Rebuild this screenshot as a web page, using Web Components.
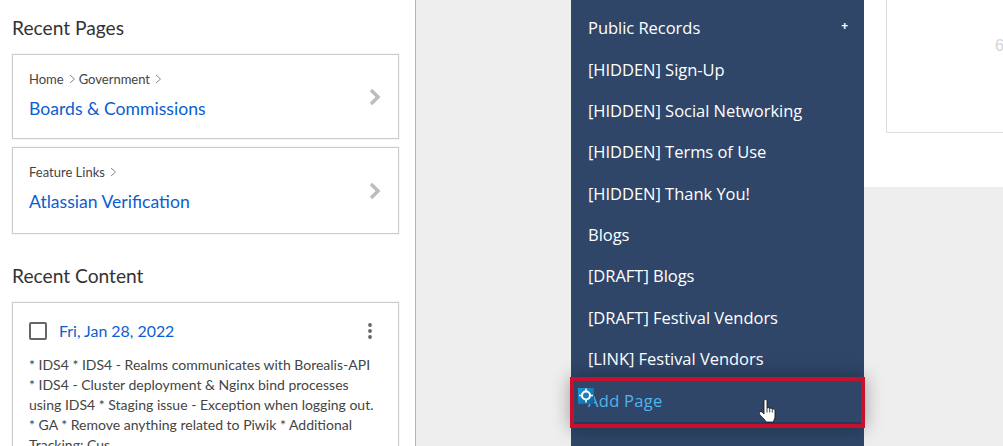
<!DOCTYPE html>
<html>
<head>
<meta charset="utf-8">
<title>Recent Pages</title>
<style>
html, body { margin: 0; height: 446px; overflow: hidden; background: #eee; }
</style>
</head>
<body>
<app-shell>
    <side-panel slot="side">
        <panel-heading>Recent Pages</panel-heading>
        <page-card crumbs="Home,Government" title="Boards &amp; Commissions" style="height:85px"></page-card>
        <page-card crumbs="Feature Links" title="Atlassian Verification" style="height:87px;margin-top:8px"></page-card>
        <panel-heading style="margin-top:30px">Recent Content</panel-heading>
        <content-card date="Fri, Jan 28, 2022">* IDS4 * IDS4 - Realms communicates with Borealis-API * IDS4 - Cluster deployment &amp; Nginx bind processes using IDS4 * Staging issue - Exception when logging out. * GA * Remove anything related to Piwik * Additional Tracking: Cus</content-card>
    </side-panel>
    <nav-menu slot="nav">
        <nav-item expandable>Public Records</nav-item>
        <nav-item>[HIDDEN] Sign-Up</nav-item>
        <nav-item>[HIDDEN] Social Networking</nav-item>
        <nav-item>[HIDDEN] Terms of Use</nav-item>
        <nav-item>[HIDDEN] Thank You!</nav-item>
        <nav-item>Blogs</nav-item>
        <nav-item>[DRAFT] Blogs</nav-item>
        <nav-item>[DRAFT] Festival Vendors</nav-item>
        <nav-item>[LINK] Festival Vendors</nav-item>
        <nav-item highlighted>Add Page</nav-item>
    </nav-menu>
    <preview-panel slot="preview">6</preview-panel>
</app-shell>

<script>
class AppShell extends HTMLElement {
    constructor() {
        super();
        this.attachShadow({mode: 'open'});
        this.shadowRoot.innerHTML = `
<style>
:host { display: flex; height: 446px; overflow: hidden; background: #eee; }
.side { flex: 0 0 416px; }
.middle { flex: 0 0 155px; }
.nav { flex: 0 0 293px; }
.preview { flex: 1; min-width: 0; }
</style>
<div class="side"><slot name="side"></slot></div>
<div class="middle"></div>
<div class="nav"><slot name="nav"></slot></div>
<div class="preview"><slot name="preview"></slot></div>`;
    }
}

class SidePanel extends HTMLElement {
    constructor() {
        super();
        this.attachShadow({mode: 'open'});
        this.shadowRoot.innerHTML = `
<style>
:host {
    display: flex;
    flex-direction: column;
    box-sizing: border-box;
    height: 446px;
    overflow: hidden;
    padding: 16px 16px 0 12px;
    background: #fff;
    border-right: 1px solid #b5b5b5;
    font-family: Lato, sans-serif;
    color: #333;
}
</style>
<slot></slot>`;
    }
}

class PanelHeading extends HTMLElement {
    constructor() {
        super();
        this.attachShadow({mode: 'open'});
        this.shadowRoot.innerHTML = `
<style>
:host { display: block; flex: none; height: 24px; line-height: 23px; margin-bottom: 14px; font-size: 19.200px; color: #333; }
</style>
<slot></slot>`;
    }
}

class PageCard extends HTMLElement {
    constructor() {
        super();
        this.attachShadow({mode: 'open'});
        let crumbs = this.getAttribute("crumbs").split(",").map(c => `<span>${c}</span>
            <svg width="7" height="10" viewBox="0 0 7 10"><path d="M1 1l4.500 4-4.500 4" fill="none" stroke="#888" stroke-width="1"/></svg>`).join("");
        this.shadowRoot.innerHTML = `
<style>
:host {
    display: flex;
    flex: none;
    align-items: center;
    box-sizing: border-box;
    padding: 0 17px 0 16px;
    border: 1px solid #ccc;
    box-shadow: 0 0 1px #ccc;
}
.text { flex: 1; align-self: flex-start; margin-top: 14px; }
.crumbs { display: flex; align-items: center; gap: 5px; font-size: 13px; line-height: 20px; color: #444; margin-bottom: 8px; }
.crumbs svg { margin-right: -2px; }
.title { font-size: 17.600px; line-height: 24px; color: #0b5ed0; }
</style>
<div class="text">
    <div class="crumbs">${crumbs}</div>
    <div class="title">${this.getAttribute("title").replace("&", "&amp;")}</div>
</div>
<svg width="12" height="18" viewBox="0 0 12 18"><path d="M2 2l7 7-7 7" fill="none" stroke="#bdbdbd" stroke-width="3.500"/></svg>`;
    }
}

class ContentCard extends HTMLElement {
    constructor() {
        super();
        this.attachShadow({mode: 'open'});
        this.shadowRoot.innerHTML = `
<style>
:host {
    display: block;
    flex: none;
    box-sizing: border-box;
    height: 200px;
    padding: 18px 17px 0 16px;
    border: 1px solid #ccc;
    box-shadow: 0 0 1px #ccc;
}
.head { display: flex; align-items: center; height: 20px; margin-bottom: 14px; }
.box { flex: none; width: 14px; height: 14px; margin-right: 12px; border: 2px solid #666; border-radius: 2px; }
.date { flex: 1; margin-top: -2px; font-size: 15.900px; color: #0b5ed0; }
.more { margin-right: 9px; }
.body { padding-right: 4px; font-size: 14px; line-height: 20px; color: #444; }
</style>
<div class="head">
    <div class="box"></div>
    <div class="date">${this.getAttribute("date")}</div>
    <svg class="more" width="4" height="16" viewBox="0 0 4 16" fill="#666"><circle cx="2" cy="2" r="1.900"/><circle cx="2" cy="8" r="1.900"/><circle cx="2" cy="14" r="1.900"/></svg>
</div>
<div class="body"><slot></slot></div>`;
    }
}

class NavMenu extends HTMLElement {
    constructor() {
        super();
        this.attachShadow({mode: 'open'});
        this.shadowRoot.innerHTML = `
<style>
:host {
    display: block;
    box-sizing: border-box;
    height: 446px;
    padding-top: 7px;
    background: #2f4669;
    font-family: "Open Sans", sans-serif;
}
</style>
<slot></slot>`;
    }
}

class NavItem extends HTMLElement {
    constructor() {
        super();
        this.attachShadow({mode: 'open'});
        let highlighted = this.hasAttribute("highlighted");
        this.shadowRoot.innerHTML = `
<style>
:host {
    display: flex;
    position: relative;
    align-items: center;
    justify-content: space-between;
    height: 41.35px;
    padding: 0 17px;
    font-size: 16.500px;
    letter-spacing: -0.03px;
    color: #fff;
}
:host([highlighted]) { color: #4db5f0; letter-spacing: 0.3px; }
:host([highlighted]) .label { margin-top: 2px; }
.plus { font-size: 12px; font-weight: 700; margin-top: -4px; margin-right: -1px; color: #fff; }
.frame {
    position: absolute;
    left: -1px;
    right: -1px;
    top: -2px;
    height: 51px;
    box-sizing: border-box;
    border: 4px solid #c8102e;
    box-shadow: 0 0 18px rgba(0,0,0,.35), inset 0 -2px 0 #263a59;
    pointer-events: none;
}
.gear { position: absolute; left: 7px; top: 9px; }
.hand { position: absolute; left: 188px; top: 20px; }
</style>
<span class="label"><slot></slot></span>
${this.hasAttribute("expandable") ? '<span class="plus">+</span>' : ''}
${highlighted ? `<div class="frame"></div>
<svg class="gear" width="16" height="16" viewBox="0 0 16 16">
    <defs><linearGradient id="g" x1="0" y1="0" x2="1" y2="1"><stop offset="0" stop-color="#1f9bd6"/><stop offset="1" stop-color="#0f5f96"/></linearGradient></defs>
    <rect width="16" height="16" fill="url(#g)"/>
    <circle cx="8" cy="7.500" r="4" fill="#1a7fb8" stroke="#fff" stroke-width="2"/>
    <path d="M8 .5v3.500M8 11v3.500M1 7.500h3.500M11.500 7.500h3.500" stroke="#fff" stroke-width="1.500"/>
</svg>
<svg class="hand" width="19" height="24" viewBox="0 0 19 24">
    <path d="M5 1.500c.5-1.200 2.500-1.200 3 0V9c1-.6 2.300-.4 2.700.5 1-.5 2.300-.2 2.600.7 1.200-.4 2.700.1 2.700 1.500V17c0 2.300-1 4-1.700 6H7c-1-2.300-2.500-3.500-5-6C.8 15.800-.2 14.500.5 13.300c.7-1 2.300-.8 3.200.2L5 15z" fill="#fff" stroke="#111" stroke-width=".8"/>
    <path d="M8 9v4.500M10.700 9.500v4M13.300 10.500v3" stroke="#111" stroke-width=".8"/>
</svg>` : ''}`;
    }
}

class PreviewPanel extends HTMLElement {
    constructor() {
        super();
        this.attachShadow({mode: 'open'});
        this.shadowRoot.innerHTML = `
<style>
:host {
    display: block;
    box-sizing: border-box;
    height: 187px;
    padding: 0 0 0 22px;
    background: #fff;
    overflow: hidden;
}
.card {
    box-sizing: border-box;
    height: 134px;
    margin-top: -1px;
    margin-right: -20px;
    padding: 37px 0 0 108px;
    border: 1px solid #ddd;
    font: 16px "Liberation Sans", Arial, sans-serif;
    color: #d4d4d4;
}
</style>
<div class="card"><slot></slot></div>`;
    }
}

customElements.define("app-shell", AppShell);
customElements.define("side-panel", SidePanel);
customElements.define("panel-heading", PanelHeading);
customElements.define("page-card", PageCard);
customElements.define("content-card", ContentCard);
customElements.define("nav-menu", NavMenu);
customElements.define("nav-item", NavItem);
customElements.define("preview-panel", PreviewPanel);
</script>
</body>
</html>
